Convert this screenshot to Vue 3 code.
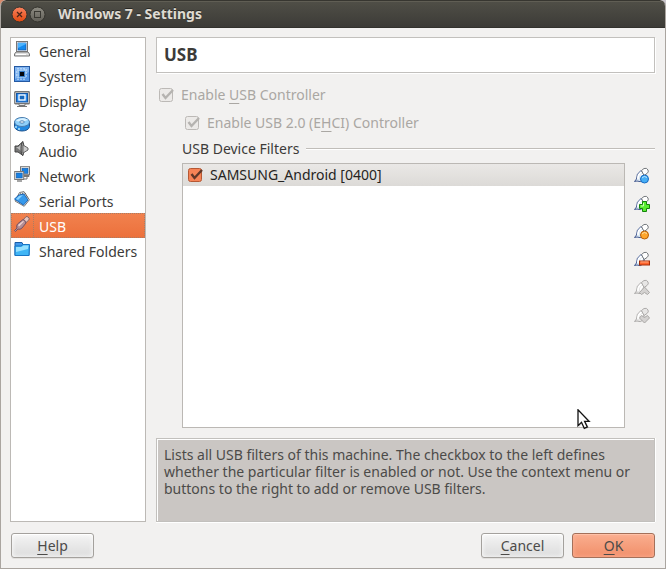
<script setup>
import { ref } from 'vue'

const categories = [
  { id: 'general', name: 'General', track: 0 },
  { id: 'system', name: 'System', track: 0 },
  { id: 'display', name: 'Display', track: 0 },
  { id: 'storage', name: 'Storage', track: 0 },
  { id: 'audio', name: 'Audio', track: 0 },
  { id: 'network', name: 'Network', track: 0 },
  { id: 'serial', name: 'Serial Ports', track: 0 },
  { id: 'usb', name: 'USB', track: 0 },
  { id: 'folders', name: 'Shared Folders', track: 0 },
]
const selected = ref('usb')
const tools = ['empty', 'add', 'edit', 'remove', 'up', 'down']
const hint = [
  'Lists all USB filters of this machine. The checkbox to the left defines',
  'whether the particular filter is enabled or not. Use the context menu or',
  'buttons to the right to add or remove USB filters.',
]
</script>

<template>
  <div class="desktop">
    <div class="window">
      <header class="titlebar">
        <svg class="controls" width="40" height="20" viewBox="0 0 40 20">
          <defs>
            <linearGradient id="closeFill" x1="0" y1="0" x2="0" y2="1"><stop offset="0" stop-color="#f98360" /><stop offset="1" stop-color="#e1480f" /></linearGradient>
            <linearGradient id="maxFill" x1="0" y1="0" x2="0" y2="1"><stop offset="0" stop-color="#8d8b82" /><stop offset="1" stop-color="#605e57" /></linearGradient>
          </defs>
          <circle cx="10.5" cy="10.5" r="7.5" fill="url(#closeFill)" stroke="#34332d" />
          <path d="M8 8l5 5M13 8l-5 5" stroke="#4b2419" stroke-width="1.3" />
          <circle cx="28.5" cy="10.5" r="7.5" fill="url(#maxFill)" stroke="#34332d" />
          <rect x="25.500" y="7.500" width="6" height="6" fill="none" stroke="#393832" />
        </svg>
        <span class="title">Windows 7 - Settings</span>
      </header>

      <div class="body">
        <nav class="sidebar">
          <div v-for="c in categories" :key="c.id" class="category" :class="{ active: selected === c.id }" @click="selected = c.id">
            <span class="icon-cell">
              <svg width="16" height="16" viewBox="0 0 16 16">
                <g v-if="c.id === 'general'">
                  <rect x="2.500" y=".5" width="11" height="10" fill="#eee" stroke="#777" />
                  <rect x="4" y="2" width="8" height="7" fill="#158af0" stroke="#1557a8" stroke-width=".7" />
                  <path d="M4 7l8-4V2H4z" fill="#4db4ff" />
                  <path d="M2 11h12l1.500 2v2H.5v-2z" fill="#ddd" stroke="#777" />
                  <path d="M2 13.500h10" stroke="#fff" />
                </g>
                <g v-else-if="c.id === 'system'">
                  <rect x=".5" y=".5" width="15" height="15" fill="#5797e5" stroke="#2459a2" />
                  <path d="M1 1h14v5L1 13z" fill="#80b4f1" />
                  <path d="M4 2v3M7 2v3M10 2v2M13 4h-3M13 7h-3M13 10h-3M4 14v-3M7 14v-3M10 14v-3M2 6h3M2 9h3" stroke="#e4f4ff" stroke-dasharray="1.500 .7" />
                  <rect x="4.500" y="4.500" width="7" height="7" fill="#367bc8" stroke="#cfeaff" stroke-dasharray="1 1" />
                  <rect x="6" y="6" width="4" height="4" fill="#05070c" />
                </g>
                <g v-else-if="c.id === 'display'">
                  <rect x=".75" y=".75" width="14.500" height="12" rx=".6" fill="#f2f2f2" stroke="#777" stroke-width="1.300" />
                  <rect x="2.500" y="2.500" width="11" height="8.500" fill="#278af0" stroke="#1658a7" />
                  <rect x="5" y="4" width="6" height="5" fill="#1768bd" stroke="#fff" stroke-width="1.300" />
                  <path d="M5 13v1.500h6V13" fill="#ddd" stroke="#777" />
                  <path d="M3 15.500h10" stroke="#777" />
                </g>
                <g v-else-if="c.id === 'storage'">
                  <path d="M.5 6v4.500C1 16.500 15 16.500 15.500 10.500V6z" fill="#2289e1" stroke="#23558e" />
                  <path d="M2 10v2M5 12v2" stroke="#aee7ff" stroke-width="1.500" />
                  <ellipse cx="8" cy="6" rx="7.500" ry="4.500" fill="#8fd0fa" stroke="#4b7cad" />
                  <path d="M2 5c1-3 9-4 12-1L8 6z" fill="#d8f1ff" />
                  <ellipse cx="8" cy="6" rx="2.300" ry="1.200" fill="#fff" stroke="#4a83b7" />
                </g>
                <g v-else-if="c.id === 'audio'">
                  <path d="M1 5h3l5-4.500v14L4 11H1z" fill="#777" stroke="#444" />
                  <path d="M2 6h2.500L7 3v7z" fill="#bbb" />
                  <ellipse cx="8.500" cy="7.700" rx="1.500" ry="6.500" fill="#999" stroke="#444" />
                  <path d="M9 4l5 3v2l-5 3z" fill="#ccc" stroke="#666" />
                </g>
                <g v-else-if="c.id === 'network'">
                  <rect x="6.500" y=".7" width="9" height="8" fill="#eee" stroke="#777" />
                  <rect x="8" y="2.300" width="6" height="5" fill="#1781e4" stroke="#1259a5" stroke-width=".6" />
                  <path d="M10 9.500h5v1h-5M13 11v2h-3" fill="none" stroke="#777" />
                  <rect x=".7" y="5.500" width="9" height="8" fill="#eee" stroke="#777" />
                  <rect x="2.200" y="7" width="6" height="5" fill="#1781e4" stroke="#1259a5" stroke-width=".6" />
                  <path d="M3 15h5" stroke="#888" stroke-width="1.500" />
                </g>
                <g v-else-if="c.id === 'serial'">
                  <path d="M5.500 1.500L10 .6l5.400 8.200-5.200 6.500L1 10z" fill="#eee" stroke="#777" />
                  <path d="M6 3l4-1M11 2l3 5" stroke="#555" stroke-dasharray="1 1" />
                  <path d="M5 4l5-1 4 6-4.500 5L3 9.700.5 8z" fill="#3699eb" stroke="#1b66b7" />
                  <path d="M5 5l4-1-5 5-2-1z" fill="#8bd4ff" />
                </g>
                <g v-else-if="c.id === 'usb'">
                  <path d="M9 4l3-3.300q1-.5 2 .3l1 1q.7 1-.2 2L11.500 7z" fill="#e8c5bd" stroke="#896564" />
                  <path d="M3.500 8L9 3.500q2 0 3 3.500L8 12q-2 2-4 1l-2.500 2.500-1-1L3 12q-1-2 .5-4z" fill="#b58e94" stroke="#735365" />
                  <path d="M4 9l5-4 1 .5-5 5z" fill="#edd3d2" />
                </g>
                <g v-else>
                  <path d="M1 4V1.500h7l1 2h6v11H1z" fill="#4298ea" stroke="#185ca8" />
                  <path d="M1 5h6l2-1.500h6.500l-.5 11H1z" fill="#40b5f5" stroke="#1775c5" />
                  <path d="M2 6h5.500l2-1.500h5L14 8 2 11z" fill="#96e1ff" />
                </g>
              </svg>
            </span>
            <span class="category-name" :class="c.id">{{ c.name }}</span>
          </div>
        </nav>

        <main class="page">
          <h1 class="page-title"><span>USB</span></h1>
          <label class="check-row first">
            <svg class="check off" width="18" height="18" viewBox="0 0 18 18"><rect x="1.500" y="2.500" width="13" height="13" rx="2" /><path d="M4.500 8l3 4L15 4" /></svg>
            <span class="c1">Enable <u>U</u>SB Controller</span>
          </label>
          <label class="check-row second">
            <svg class="check off" width="18" height="18" viewBox="0 0 18 18"><rect x="1.500" y="2.500" width="13" height="13" rx="2" /><path d="M4.500 8l3 4L15 4" /></svg>
            <span class="c2">Enable USB 2.0 (E<u>H</u>CI) Controller</span>
          </label>
          <div class="group-head"><span class="gh">USB Device Filters</span><i></i></div>
          <div class="filters">
            <div class="filter-list">
              <div class="filter">
                <svg class="check on" width="18" height="18" viewBox="0 0 18 18"><rect x="1.500" y="2.500" width="13" height="13" rx="2" /><path d="M4.500 8l3 4L15 4" /></svg>
                <span class="fl">SAMSUNG_Android [0400]</span>
              </div>
            </div>
            <div class="tools">
              <svg v-for="t in tools" :key="t" width="18" height="18" viewBox="0 0 18 18" :class="{ disabled: t === 'up' || t === 'down' }">
                <path class="plug" d="M1.500 14.500l2-2.500q-.5-5 4.500-8.500l3 4v5q-4 3.500-7 1.500z" />
                <path class="shade" d="M5 12q-.5-4 3.500-7M8 12q-1-3 2-5" />
                <path class="tip" d="M8.500 3.500l2.500-2q3-1 4 1.500 1 2-1 3.500l-3 2z" />
                <circle v-if="t === 'empty'" cx="11.500" cy="12" r="4" fill="#46aef5" stroke="#176ac2" />
                <path v-if="t === 'empty'" d="M9 11q2-3 5-.5" fill="none" stroke="#b9e6ff" />
                <path v-if="t === 'add'" d="M9.500 6.500h4v3h3v4h-3v3h-4v-3h-3v-4h3z" fill="#58ed2f" stroke="#15840c" />
                <path v-if="t === 'add'" d="M10.500 8v3H8" fill="none" stroke="#c7ffb6" />
                <circle v-if="t === 'edit'" cx="11.500" cy="12" r="4" fill="#ffa62c" stroke="#b85f07" />
                <path v-if="t === 'edit'" d="M9 11q2-3 5-.5" fill="none" stroke="#ffe0a0" />
                <rect v-if="t === 'remove'" x="6.500" y="10" width="10" height="4" fill="#ff642d" stroke="#a32d08" />
                <path v-if="t === 'remove'" d="M7.500 11h8" stroke="#ffac84" />
                <path v-if="t === 'up'" class="arrow" d="M11.500 8l5 5.500-2 2-3-2-3 2-2-2z" />
                <path v-if="t === 'down'" class="arrow" d="M11.500 16l5-5-2-2.500-3 2-3-2-2 2.500z" />
              </svg>
            </div>
          </div>
          <div class="hint"><div v-for="(line, i) in hint" :key="i"><span :class="'h' + i">{{ line }}</span></div></div>
        </main>
      </div>

      <footer class="footer">
        <button class="btn"><span class="b0"><u>H</u>elp</span></button>
        <button class="btn push"><span class="b1"><u>C</u>ancel</span></button>
        <button class="btn primary"><span class="b2"><u>O</u>K</span></button>
      </footer>
    </div>
    <svg class="pointer" width="16" height="22" viewBox="0 0 16 22">
      <path d="M2 1v17l4-4 3 6 3-1.500-3-5.500h5.500z" fill="#777" opacity=".25" />
      <path d="M1 .8v16l3.500-3.500 2.800 6 3-1.400-2.700-5.500H12z" fill="#fff" stroke="#111" stroke-width="1.300" />
    </svg>
  </div>
</template>

<style>
body { margin: 0; overflow: hidden; }
</style>

<style scoped>
* { box-sizing: border-box; }
.desktop { position: relative; width: 666px; height: 569px; background: linear-gradient(90deg, #d98b6c, #cbc7ce); font: 14px/18px "Noto Sans", sans-serif; color: #3c3b39; }
.window { width: 666px; height: 569px; display: flex; flex-direction: column; background: #f2f1f0; border: 1px solid #aaa5a0; border-top: 0; border-radius: 6px 6px 0 0; overflow: hidden; }
.titlebar { height: 28px; margin: 0 -1px; padding-left: 9px; flex: none; display: flex; align-items: center; background: linear-gradient(#504f47, #3c3b37); border-top: 1px solid #373630; border-bottom: 1px solid #32312d; box-shadow: inset 0 1px #605e54; border-radius: 6px 6px 0 0; }
.controls { flex: none; }
.title { margin-left: 9px; color: #dfdbd2; font-weight: 700; text-shadow: 0 -1px #292824; white-space: nowrap; }
.body { flex: none; display: flex; gap: 10px; padding: 9px 10px 0 9px; height: 494px; }
.sidebar { width: 136px; height: 485px; border: 1px solid #bcb9b5; background: #fff; flex: none; }
.category { height: 25px; display: flex; align-items: center; white-space: nowrap; }
.icon-cell { width: 23px; height: 25px; padding: 3px 0 0 3px; flex: none; }
.icon-cell svg { display: block; }
.category-name { margin-left: 5px; position: relative; top: 1px; }
.active { color: #fff; background: linear-gradient(#f1824f, #ec703b); outline: 1px dotted #a87d65; outline-offset: -1px; }
.active .icon-cell { border-right: 1px dotted #a87d65; }
.page { flex: 1; min-width: 0; display: flex; flex-direction: column; }
.page-title { height: 36px; margin: 0; flex: none; padding-left: 7px; display: flex; align-items: center; background: #fff; border: 1px solid #c2c0bd; box-shadow: 1px 1px #fff; font-size: 17px; font-weight: 700; }
.check-row { display: flex; align-items: center; height: 28px; white-space: nowrap; color: #aaa7a3; }
.first { margin-top: 8px; padding-left: 2px; }
.second { padding-left: 28px; }
.check { flex: none; margin-right: 5px; }
.check rect { stroke-width: 1; }
.check path { fill: none; stroke-width: 2.4; }
.off rect { fill: #eceae8; stroke: #bcb9b6; }
.off path { stroke: #b5b3b0; }
.on rect { fill: #f58356; stroke: #b65833; }
.on path { stroke: #5f3728; }
u { text-decoration: underline; text-underline-offset: 3px; text-decoration-thickness: 1px; text-decoration-skip-ink: none; }
.group-head { display: flex; align-items: center; gap: 7px; height: 24px; padding-left: 26px; white-space: nowrap; }
.group-head i { flex: 1; height: 2px; background: #c0bdb9; border-bottom: 1px solid #fff; }
.filters { display: flex; margin: 2px 0 10px 26px; height: 265px; flex: none; }
.filter-list { width: 443px; border: 1px solid #bbb8b4; background: #fff; }
.filter { height: 22px; padding-left: 4px; display: flex; align-items: center; white-space: nowrap; background: linear-gradient(#eae8e6, #dcdad7); color: #252422; }
.tools { display: flex; flex-direction: column; gap: 10px; padding: 4px 0 0 8px; }
.plug { fill: #dae7f2; stroke: #43598f; }
.shade { fill: none; stroke: #fff; stroke-width: 1.6; }
.tip { fill: #fff; stroke: #74787c; }
.disabled .plug, .disabled .tip { fill: #e7e6e5; stroke: #adabaa; }
.arrow { fill: #d4d2d1; stroke: #aaa8a6; }
.hint { height: 84px; flex: none; padding: 7px; line-height: 17px; background: #cac6c3; border: 1px solid #c2c0bd; box-shadow: inset 1px 1px #fff, 0 1px #fff, 1px 0 #fff; color: #4c4b49; white-space: nowrap; }
.footer { display: flex; gap: 8px; padding: 11px 10px 0; }
.btn { width: 83px; height: 25px; padding: 0; border: 1px solid #a4a19d; border-radius: 3px; font: inherit; color: #4c4b49; background: linear-gradient(#f4f4f4, #dcdcdc); box-shadow: inset 0 1px #fff, inset 0 0 5px #fff, 0 1px #e2e0de; }
.push { margin-left: auto; }
.primary { background: linear-gradient(#faae8f, #f18f6a); border-color: #a4705a; box-shadow: inset 0 1px #ffc1a8, inset 0 0 5px #ffb499; }
.pointer { position: absolute; left: 577px; top: 409px; }
</style>
